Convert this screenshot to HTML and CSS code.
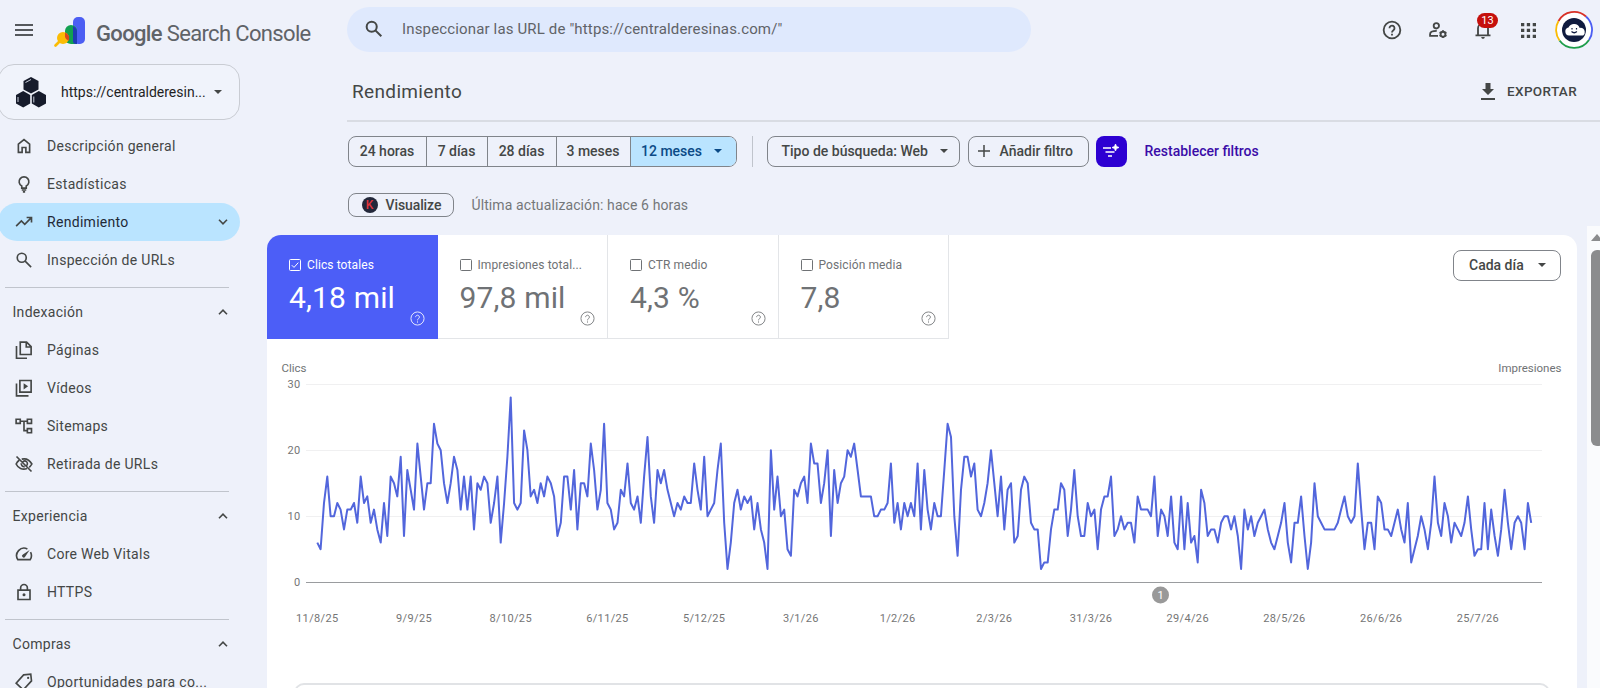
FILE: index.html
```html
<!DOCTYPE html>
<html lang="es">
<head>
  <meta charset="UTF-8">
  <meta name="viewport" content="width=device-width, initial-scale=1.0">
  <title>Rendimiento</title>
  <link rel="stylesheet" href="styles.css">
</head>
<body>

<header class="topbar">
  <svg class="menu" viewBox="0 0 18 12"><path d="M0 1h18M0 6h18M0 11h18"/></svg>
  <svg class="logo" viewBox="0 0 32 30">
    <path d="M1.5 28.500L6 24" stroke="#fbbc04" stroke-width="2.600" stroke-linecap="round"/>
    <rect x="19" y="0" width="12" height="27" rx="5" fill="#4c5ef3"/>
    <path d="M11 14a6 6 0 0 1 12 0v13h-6a6 6 0 0 1-6-6z" fill="#12a150"/>
    <path d="M19 9.200A6 6 0 0 1 23 14v13h-1a3 3 0 0 1-3-3z" fill="#1f3bb3"/>
    <circle cx="9" cy="21" r="6" fill="#fbbc04"/>
    <path d="M11 15.400a6 6 0 0 1 3.600 8.600a6 6 0 0 1-3.600-4z" fill="#d9481c"/>
  </svg>
  <div class="brand"><b>Google</b> Search Console</div>
  <div class="search">
    <svg class="icon" viewBox="0 0 24 24"><circle cx="9.500" cy="9.500" r="5.500"/><path d="M13.500 13.500L20 20"/></svg>
    <span>Inspeccionar las URL de "https://centralderesinas.com/"</span>
  </div>
  <div class="tools">
    <svg class="icon" viewBox="0 0 24 24"><circle cx="12" cy="12" r="10"/><path d="M9 9.800a3 3 0 1 1 4.700 2.400C12.600 13 12 13.500 12 15M12 16.600v2"/></svg>
    <svg class="icon" viewBox="0 0 24 24"><circle cx="10" cy="7" r="3.200"/><path d="M12 19H2.500v-2c0-2.500 3.500-3.900 8-3.900"/><circle cx="18" cy="17" r="2.900"/><path d="M18 12.300v2M18 19.700v2M13.900 14.700l1.800 1M20.300 18.300l1.800 1M13.900 19.300l1.800-1M20.300 15.700l1.800-1"/></svg>
    <div class="bell">
      <svg class="icon" viewBox="0 0 24 24"><path d="M3 18.500h18M6 18.500V10a6 6 0 0 1 12 0v8.500"/><path class="solid" d="M9.800 20.500h4.400a2.200 2.200 0 0 1-4.400 0z"/></svg>
      <span class="badge">13</span>
    </div>
    <svg class="icon apps" viewBox="0 0 16 16"><path class="solid" d="M0 0h3.500v3.500H0zM6.200 0h3.500v3.500H6.200zM12.500 0H16v3.500h-3.500zM0 6.200h3.500v3.500H0zM6.200 6.200h3.500v3.500H6.200zM12.500 6.200H16v3.500h-3.500zM0 12.500h3.500V16H0zM6.200 12.500h3.500V16H6.200zM12.500 12.500H16V16h-3.500z"/></svg>
    <svg class="avatar" viewBox="0 0 38 38">
      <circle cx="19" cy="19" r="17" fill="#fff"/>
      <g fill="none" stroke-width="1.800">
        <path d="M3.500 10A18 18 0 0 1 31 5.500" stroke="#d93025"/>
        <path d="M31 5.500A18 18 0 0 1 34 29" stroke="#4c5ef3"/>
        <path d="M34 29A18 18 0 0 1 4.500 29.500" stroke="#1e9e4a"/>
        <path d="M4.500 29.500A18 18 0 0 1 3.500 10" stroke="#fbbc04"/>
      </g>
      <circle cx="19" cy="19" r="12" fill="#101b3f"/>
      <path d="M14 24.500a4 4 0 0 1-.5-7.900 6 6 0 0 1 11.200.4 4 4 0 0 1 5 3.500 4 4 0 0 1-1.500 4z" fill="#fff"/>
      <path d="M17 17v1.500M21.500 17v1.500M16.500 20.500q2.700 2.500 5.400 0" stroke="#101b3f" stroke-width="1.200" fill="none"/>
    </svg>
  </div>
</header>

<div class="page">
  <aside class="sidebar">
    <div class="property">
      <svg class="site" viewBox="0 0 30 31">
        <g fill="#161b2b">
          <path d="M15 0l7.500 4v8.500L15 16.500l-7.500-4V4z"/>
          <path d="M7.200 14l7 4v8.500l-7 4-7.200-4V18z"/>
          <path d="M22.800 14l7.200 4v8.500l-7.200 4-7-4V18z"/>
        </g>
        <path d="M9.500 5.500l5.500-3M2 20v5M17.800 19.500v6" stroke="#c9cedb" fill="none"/>
      </svg>
      <span class="property-name">https://centralderesin...</span>
      <i class="caret"></i>
    </div>

    <nav>
      <a class="item"><svg class="icon" viewBox="0 0 24 24"><path d="M4.500 20.500V9.500L12 3.500l7.500 6v11h-5v-6.500h-5v6.500z"/></svg>Descripción general</a>
      <a class="item"><svg class="icon" viewBox="0 0 24 24"><path d="M9 17.500v-2.800A6.500 6.500 0 1 1 15 14.700v2.800zM9 20h6M10.500 22.500h3"/></svg>Estadísticas</a>
      <a class="item active"><svg class="icon" viewBox="0 0 24 24"><path d="M1.500 17.500l7-7 4.500 4.500 8.500-8.500M15.500 6H22v6.500"/></svg>Rendimiento<svg class="chev" viewBox="0 0 10 6"><path d="M1 .8l4 4 4-4"/></svg></a>
      <a class="item"><svg class="icon" viewBox="0 0 24 24"><circle cx="9" cy="9" r="6"/><path d="M13.500 13.500L21.500 21.500"/></svg>Inspección de URLs</a>
      <hr>
      <div class="group">Indexación<svg class="chev" viewBox="0 0 10 6"><path d="M1 5.200l4-4 4 4"/></svg></div>
      <a class="item"><svg class="icon" viewBox="0 0 24 24"><path d="M7 1.500h8.500l6 6V18H7zM15 2v6h6M2 6.500V23h14"/></svg>Páginas</a>
      <a class="item"><svg class="icon" viewBox="0 0 24 24"><path d="M6.500 2h15v15.500h-15zM2 6v16.500h16"/><path class="solid" d="M11.500 5.500v8.500l6-4.200z"/></svg>Vídeos</a>
      <a class="item"><svg class="icon" viewBox="0 0 24 24"><path d="M1.500 3h5.500v5.500H1.500zM16.500 3h5.500v5.500h-5.500zM16.500 15.500h5.500V21h-5.500zM7 5.700h9.500M12 6v12.200h4.500"/></svg>Sitemaps</a>
      <a class="item"><svg class="icon" viewBox="0 0 24 24"><path d="M2 2l20 20M9 5.500c6-1.500 11 2 13.500 6.500-1 2-2.200 3.300-3.500 4.500M16 18c-6 2.500-12-.5-14.500-6C2.500 10 3.800 8.300 5.500 7M10.500 9a3.500 3.500 0 0 1 5 5M8.500 11a3.800 3.800 0 0 0 4.500 4.500"/></svg>Retirada de URLs</a>
      <hr>
      <div class="group">Experiencia<svg class="chev" viewBox="0 0 10 6"><path d="M1 5.200l4-4 4 4"/></svg></div>
      <a class="item"><svg class="icon" viewBox="0 0 24 24"><path d="M16.500 5.200A10 10 0 0 0 3.700 19.500h16.600a10 10 0 0 0 .4-10"/><path class="solid" d="M19.500 6.500l-9 6a2.200 2.200 0 1 0 3 3z"/></svg>Core Web Vitals</a>
      <a class="item"><svg class="icon" viewBox="0 0 24 24"><path d="M4 9.500h16V22H4zM7.500 9.500V6.500a4.500 4.500 0 0 1 9 0v3"/><circle class="solid" cx="12" cy="15.700" r="2"/></svg>HTTPS</a>
      <hr>
      <div class="group">Compras<svg class="chev" viewBox="0 0 10 6"><path d="M1 5.200l4-4 4 4"/></svg></div>
      <a class="item"><svg class="icon" viewBox="0 0 24 24"><path d="M11.500 2.500L21 1.500l1 9L11 22.500l-9.500-9z"/><circle class="solid" cx="17.500" cy="6.500" r="1.500"/></svg>Oportunidades para co...</a>
    </nav>
  </aside>

  <main class="main">
    <div class="title-row">
      <h1>Rendimiento</h1>
      <div class="export"><svg viewBox="0 0 14 17"><path d="M4.500 0h5v6H13L7 12 1 6h3.500zM0 15h14v2H0z"/></svg>EXPORTAR</div>
    </div>

    <div class="filters">
      <div class="segments">
        <span class="seg s1">24 horas</span>
        <span class="seg s2">7 días</span>
        <span class="seg s3">28 días</span>
        <span class="seg s4">3 meses</span>
        <span class="seg s5 on">12 meses<i class="caret"></i></span>
      </div>
      <span class="split"></span>
      <div class="btn type">Tipo de búsqueda: Web<i class="caret"></i></div>
      <div class="btn add"><svg viewBox="0 0 12 12"><path d="M6 0v12M0 6h12"/></svg>Añadir filtro</div>
      <div class="ai"><svg viewBox="0 0 16 16"><path d="M0 4h8M2.500 8h9M5 12h4" fill="none" stroke="#fff" stroke-width="1.600"/><path d="M12.500 0l1 2.500L16 3.500l-2.500 1-1 2.500-1-2.500L9 3.500l2.500-1z" fill="#fff" stroke="#fff" stroke-width=".8"/></svg></div>
      <a class="reset">Restablecer filtros</a>
    </div>

    <div class="status">
      <div class="btn visualize"><span class="k">K</span>Visualize</div>
      <span class="updated">Última actualización: hace 6 horas</span>
    </div>

    <section class="card">
      <div class="card-top">
        <div class="metric selected">
          <div class="label"><svg class="box" viewBox="0 0 12 12"><rect x=".5" y=".5" width="11" height="11" rx="1"/><path d="M2.800 6.200l2.200 2.200 4.300-4.800"/></svg>Clics totales</div>
          <div class="value">4,18 mil</div>
          <svg class="help" viewBox="0 0 24 24"><circle cx="12" cy="12" r="10.500"/><path d="M9 9.800a3 3 0 1 1 4.700 2.400C12.600 13 12 13.500 12 15M12 16.600v2"/></svg>
        </div>
        <div class="metric">
          <div class="label"><svg class="box" viewBox="0 0 12 12"><rect x=".5" y=".5" width="11" height="11" rx="1"/></svg>Impresiones total...</div>
          <div class="value">97,8 mil</div>
          <svg class="help" viewBox="0 0 24 24"><circle cx="12" cy="12" r="10.500"/><path d="M9 9.800a3 3 0 1 1 4.700 2.400C12.600 13 12 13.500 12 15M12 16.600v2"/></svg>
        </div>
        <div class="metric">
          <div class="label"><svg class="box" viewBox="0 0 12 12"><rect x=".5" y=".5" width="11" height="11" rx="1"/></svg>CTR medio</div>
          <div class="value">4,3 %</div>
          <svg class="help" viewBox="0 0 24 24"><circle cx="12" cy="12" r="10.500"/><path d="M9 9.800a3 3 0 1 1 4.700 2.400C12.600 13 12 13.500 12 15M12 16.600v2"/></svg>
        </div>
        <div class="metric">
          <div class="label"><svg class="box" viewBox="0 0 12 12"><rect x=".5" y=".5" width="11" height="11" rx="1"/></svg>Posición media</div>
          <div class="value">7,8</div>
          <svg class="help" viewBox="0 0 24 24"><circle cx="12" cy="12" r="10.500"/><path d="M9 9.800a3 3 0 1 1 4.700 2.400C12.600 13 12 13.500 12 15M12 16.600v2"/></svg>
        </div>
        <div class="btn period">Cada día<i class="caret"></i></div>
      </div>
      <div class="axis-names"><span>Clics</span><span>Impresiones</span></div>
      <svg id="chart" width="1309" height="260" viewBox="267 375 1309 260"></svg>
      <div class="next"></div>
    </section>
  </main>

  <div class="scrollbar"><i class="up"></i><i class="thumb"></i></div>
</div>

<script src="chart.js"></script>
</body>
</html>
```
FILE: styles.css
```css
* {
  box-sizing: border-box;
}

body {
  margin: 0;
  width: 1600px;
  height: 688px;
  overflow: hidden;
  background-color: #eef1fa;
  color: #444746;
  font-family: Roboto, "Liberation Sans", sans-serif;
  font-size: 14px;
}

.icon {
  width: 18px;
  height: 18px;
  flex: none;
  fill: none;
  stroke: #444746;
  stroke-width: 2.2;
}

.icon .solid {
  fill: #444746;
  stroke: none;
}

.caret {
  border: 4px solid transparent;
  border-top: 4px solid #444746;
  border-bottom: 0;
}

/* top bar */
.topbar {
  display: flex;
  align-items: center;
  height: 60px;
  padding-left: 15px;
}

.menu {
  width: 18px;
  height: 12px;
  stroke: #55585c;
  stroke-width: 2;
}

.logo {
  width: 32px;
  height: 30px;
  margin: 3px 0 0 21px;
  fill: none;
}

.brand {
  width: 251px;
  margin: 6px 0 0 10px;
  color: #5f6368;
  font-size: 22px;
  letter-spacing: -0.65px;
  white-space: nowrap;
}

.brand b {
  font-weight: 500;
}

.search {
  display: flex;
  align-items: center;
  width: 684px;
  height: 45px;
  margin-top: -2px;
  padding-left: 16px;
  border-radius: 23px;
  background-color: #dfe9fd;
  color: #5f6368;
  font-size: 15px;
  letter-spacing: 0.15px;
}

.search .icon {
  width: 22px;
  height: 22px;
  margin-right: 17px;
}

.tools {
  display: flex;
  align-items: center;
  gap: 26px;
  margin-left: 351px;
}

.tools .icon {
  width: 20px;
  height: 20px;
}

.tools .apps {
  width: 15px;
  height: 15px;
  margin: 0 -1px 0 2px;
}

.bell {
  position: relative;
  height: 20px;
  margin-left: -1px;
}

.badge {
  position: absolute;
  left: 4px;
  top: -7px;
  width: 21px;
  height: 15px;
  border-radius: 8px;
  background-color: #c5100c;
  color: #fff;
  font-size: 11px;
  line-height: 15px;
  text-align: center;
}

.avatar {
  width: 38px;
  height: 38px;
  margin-left: -6px;
}

.page {
  display: flex;
  height: 628px;
}

/* sidebar */
.sidebar {
  width: 267px;
  flex: none;
  padding-top: 4px;
}

.property {
  display: flex;
  align-items: center;
  width: 242px;
  height: 56px;
  margin-left: -2px;
  padding-left: 17px;
  border: 1px solid #c9ccd3;
  border-radius: 16px;
  background-color: #f0f3fb;
  color: #1f1f1f;
}

.site {
  width: 30px;
  height: 31px;
}

.property-name {
  width: 144px;
  margin: -1px 9px 0 15px;
  white-space: nowrap;
}

nav {
  padding-top: 7px;
}

.item,
.group {
  display: flex;
  align-items: center;
  height: 37.9px;
  width: 240px;
  font-weight: 450;
  letter-spacing: 0.3px;
  white-space: nowrap;
}

.item {
  gap: 14px;
  padding-left: 15px;
}

.group {
  padding-left: 12.5px;
}

.active {
  width: 242px;
  margin-left: -2px;
  padding-left: 17px;
  border-radius: 19px;
  background-color: #bae4ff;
  color: #1f2937;
}

.chev {
  width: 10px;
  height: 6px;
  margin: 0 12px 0 auto;
  fill: none;
  stroke: #444746;
  stroke-width: 1.6;
}

nav hr {
  width: 224px;
  height: 1px;
  margin: 8px 0 5.5px 5px;
  border: 0;
  background-color: #c0c4cc;
}

/* main column */
.main {
  width: 1310px;
  flex: none;
}

.title-row {
  display: flex;
  align-items: center;
  justify-content: space-between;
  width: 1253px;
  height: 62px;
  margin-left: 80px;
  padding: 2px 23px 0 5px;
  border-bottom: 2px solid #d9dce3;
}

h1 {
  margin: 0;
  font-size: 19px;
  font-weight: 450;
  letter-spacing: 0.35px;
}

.export {
  display: flex;
  align-items: center;
  gap: 12px;
  font-weight: 500;
  font-size: 13.5px;
  letter-spacing: 0.35px;
}

.export svg {
  width: 14px;
  height: 17px;
  fill: #444746;
}

.filters {
  display: flex;
  align-items: center;
  height: 31px;
  margin: 14px 0 0 80.5px;
  font-weight: 500;
}

.segments {
  display: flex;
  height: 31px;
  border: 1px solid #80848a;
  border-radius: 8px;
  overflow: hidden;
}

.seg {
  display: flex;
  align-items: center;
  justify-content: center;
  padding-bottom: 1px;
  border-right: 1px solid #80848a;
}

.s1 { width: 78px; }
.s2 { width: 61px; }
.s3 { width: 69px; }
.s4 { width: 74px; }

.s5 {
  width: 105px;
  gap: 12px;
  padding-right: 3px;
  border-right: 0;
}

.on {
  background-color: #bae4ff;
  color: #0b4a86;
}

.on .caret {
  border-top-color: #0b4a86;
}

.split {
  width: 1px;
  height: 31px;
  margin: 0 14px 0 15px;
  background-color: #c0c4cc;
}

.btn {
  display: flex;
  align-items: center;
  height: 31px;
  padding-bottom: 1px;
  border: 1px solid #80848a;
  border-radius: 8px;
  font-weight: 500;
  white-space: nowrap;
}

.type {
  width: 193px;
  padding-left: 14px;
  gap: 12px;
}

.add {
  width: 121px;
  margin-left: 8px;
  padding-left: 9px;
  gap: 10px;
}

.add svg {
  width: 12px;
  height: 12px;
  stroke: #444746;
  stroke-width: 1.5;
}

.ai {
  display: flex;
  align-items: center;
  justify-content: center;
  width: 31px;
  height: 31px;
  margin: 0 18px 0 7px;
  border-radius: 8px;
  background-color: #2d00d2;
}

.ai svg {
  width: 16px;
  height: 16px;
}

.reset {
  padding-bottom: 1px;
  color: #3a0ca8;
}

.status {
  display: flex;
  align-items: center;
  height: 24px;
  margin: 26px 0 0 80.5px;
}

.visualize {
  width: 106px;
  height: 24px;
  padding-left: 13px;
  gap: 8px;
  letter-spacing: -0.1px;
}

.k {
  width: 16px;
  height: 16px;
  border-radius: 50%;
  background-color: #23283a;
  color: #e0353d;
  font-size: 12px;
  line-height: 16px;
  text-align: center;
}

.updated {
  margin: -1px 0 0 18px;
  color: #747779;
  letter-spacing: 0.1px;
}

/* performance card */
.card {
  height: 460px;
  margin-top: 18px;
  border-radius: 14px 14px 0 0;
  background-color: #fff;
  overflow: hidden;
}

.card-top {
  display: flex;
  height: 104px;
}

.metric {
  position: relative;
  width: 170.5px;
  height: 103.5px;
  padding: 24px 0 0 22px;
  border-right: 1px solid #e3e5e8;
  border-bottom: 1px solid #e3e5e8;
  color: #6f7275;
}

.selected {
  border-color: #4c5ef7;
  background-color: #4c5ef7;
  color: #fff;
}

.label {
  display: flex;
  align-items: center;
  gap: 6px;
  height: 12px;
  font-size: 12px;
  letter-spacing: 0.1px;
  white-space: nowrap;
}

.box {
  width: 12px;
  height: 12px;
  fill: none;
  stroke: currentColor;
}

.value {
  margin-top: 9px;
  font-size: 30px;
  line-height: 36px;
  letter-spacing: 0.15px;
}

.help {
  position: absolute;
  right: 12px;
  bottom: 12px;
  width: 15px;
  height: 15px;
  fill: none;
  stroke: currentColor;
  stroke-width: 1.6;
  opacity: 0.85;
}

.period {
  width: 108px;
  margin: 15px 16px 0 auto;
  padding-left: 15px;
  gap: 14px;
}

.axis-names {
  display: flex;
  justify-content: space-between;
  height: 36px;
  padding: 22px 15.5px 0 14.5px;
  color: #6f7275;
  font-size: 11.5px;
}

#chart {
  display: block;
}

#chart .grid {
  stroke: #f0f0f1;
}

#chart .base {
  stroke: #9a9c9f;
}

#chart text {
  fill: #757575;
  font-size: 11px;
  letter-spacing: 0.35px;
}

#chart .clicks {
  fill: none;
  stroke: #5266dc;
  stroke-width: 2;
  stroke-linejoin: round;
}

#chart .note {
  fill: #999;
}

#chart .note-text {
  fill: #fff;
  letter-spacing: 0;
}

.next {
  height: 40px;
  margin: 48px 27px 0;
  border: 2px solid #e1e3e6;
  border-radius: 10px;
}

/* scrollbar */
.scrollbar {
  width: 13px;
  height: 462px;
  margin: 166px 0 0 10px;
  padding: 8px 0 0 4px;
  background-color: #fafbfd;
  overflow: hidden;
}

.up {
  display: block;
  width: 12px;
  border: 6px solid transparent;
  border-top: 0;
  border-bottom: 7px solid #8b8c8e;
}

.thumb {
  display: block;
  width: 13px;
  height: 196px;
  margin-top: 9px;
  border-radius: 6px;
  background-color: #8b8c8e;
}
```
FILE: chart.js
```js
// clicks per day, 11/8/25 onwards
const clicks = [
  6,5,12,16,10,10,12,11,8,11,11,12,9,16,12,13,9,11,8,6,12,7,16,15,13,19,7,17,14,
  11,21,16,11,15,15,24,21,20,15,12,15,19,17,11,16,11,16,8,15,14,16,15,9,12,16,6,12,19,
  28,12,11,12,23,20,13,14,12,15,13,16,15,13,7,9,16,16,11,17,8,15,15,13,21,17,11,14,24,
  12,11,8,9,14,13,18,12,11,13,9,16,22,13,9,17,15,17,14,12,10,12,11,13,12,12,18,14,11,
  19,10,11,12,17,21,9,2,6,12,14,11,13,12,13,8,12,8,6,2,20,11,16,10,11,5,4,14,13,
  15,16,12,21,18,18,12,15,20,7,17,12,15,16,20,19,21,17,13,13,13,13,10,10,11,11,12,18,9,
  12,8,12,10,12,10,18,8,17,11,8,12,10,10,17,24,22,10,4,14,19,19,16,18,11,10,12,15,
  20,15,10,16,8,14,15,6,7,14,16,15,9,8,8,2,3,3,8,11,11,15,14,7,11,17,10,7,7,
  12,10,11,5,11,13,13,16,7,8,10,8,9,9,6,13,11,11,11,10,16,7,11,10,7,13,6,5,13,
  5,12,6,7,3,14,12,7,8,8,6,9,10,10,8,10,7,2,11,8,10,7,9,10,11,8,6,5,7,
  9,12,6,3,9,9,13,7,2,6,15,10,9,8,8,8,8,9,11,13,10,9,10,18,11,5,9,9,
  5,13,12,8,8,7,9,11,8,6,12,3,5,7,10,8,5,9,16,9,7,12,10,6,9,8,7,9,13,
  8,4,5,5,12,5,11,7,4,8,14,9,5,9,10,9,5,12,9
];
const dates = ['11/8/25', '9/9/25', '8/10/25', '6/11/25', '5/12/25', '3/1/26', '1/2/26',
  '2/3/26', '31/3/26', '29/4/26', '28/5/26', '26/6/26', '25/7/26'];

const x = i => 317.3 + i * 3.335;
const y = v => 582.2 - v * 6.6;

let out = '';
[30, 20, 10, 0].forEach(v => {
  const gy = Math.floor(y(v)) + 0.5;
  out += `<line class="${v ? 'grid' : 'base'}" x1="306" x2="1542" y1="${gy}" y2="${gy}"/>`;
  out += `<text x="300.500" y="${gy + 3.5}" text-anchor="end">${v}</text>`;
});
dates.forEach((d, i) => {
  out += `<text x="${x(i * 29)}" y="622" text-anchor="middle">${d}</text>`;
});
out += `<polyline class="clicks" points="${clicks.map((v, i) => x(i).toFixed(1) + ',' + y(v).toFixed(1)).join(' ')}"/>`;
out += '<circle class="note" cx="1160.500" cy="595" r="8.500"/>';
out += '<text class="note-text" x="1160.500" y="598.500" text-anchor="middle">1</text>';
document.getElementById('chart').innerHTML = out;
```
